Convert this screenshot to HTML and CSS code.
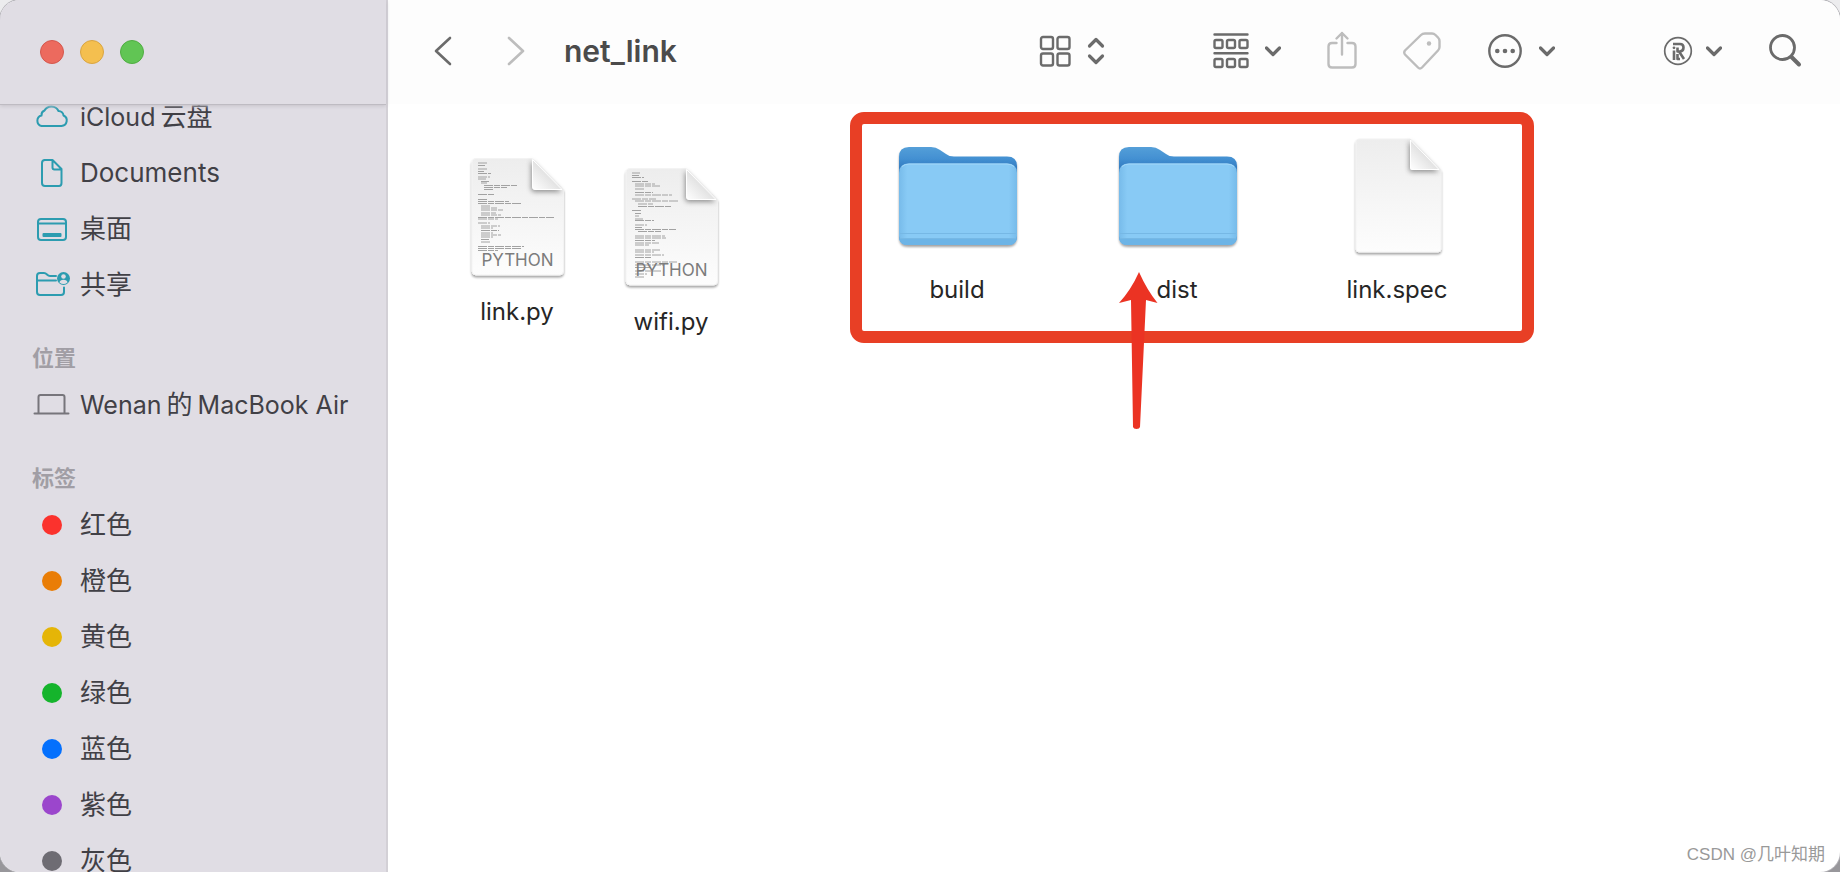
FILE: index.html
```html
<!DOCTYPE html>
<html lang="zh-CN">
<head>
<meta charset="utf-8">
<title>net_link</title>
<link rel="stylesheet" href="styles.css">
</head>
<body>
<svg class="defs" aria-hidden="true">
  <defs>
    <linearGradient id="paper" x1="0" y1="0" x2="0" y2="1"><stop offset="0" stop-color="#ededed"/><stop offset="1" stop-color="#fdfdfd"/></linearGradient>
    <linearGradient id="fold" x1="0" y1="1" x2="1" y2="0"><stop offset="0" stop-color="#ffffff"/><stop offset="0.5" stop-color="#e2e2e2"/><stop offset="1" stop-color="#f4f4f4"/></linearGradient>
    <linearGradient id="tab" x1="0" y1="0" x2="0" y2="1"><stop offset="0" stop-color="#559fd8"/><stop offset="0.12" stop-color="#4390d2"/><stop offset="0.24" stop-color="#2f76bb"/></linearGradient>
    <linearGradient id="front" x1="0" y1="0" x2="1" y2="0"><stop offset="0" stop-color="#77bbea"/><stop offset="0.07" stop-color="#88caf5"/><stop offset="0.93" stop-color="#88caf5"/><stop offset="1" stop-color="#77bbea"/></linearGradient>
    <filter id="drop" x="-10%" y="-10%" width="120%" height="125%"><feDropShadow dx="0" dy="2" stdDeviation="1.3" flood-color="#000" flood-opacity="0.36"/></filter>
    <filter id="soft" x="-30%" y="-30%" width="160%" height="160%"><feDropShadow dx="-1" dy="2" stdDeviation="2.500" flood-color="#000" flood-opacity="0.4"/></filter>
    <symbol id="chevron" viewBox="0 0 16 12"><path d="M1.500 3 8 9.500l6.500-6.500" fill="none" stroke="currentColor" stroke-width="3.200" stroke-linecap="round" stroke-linejoin="round"/></symbol>
    <symbol id="page" viewBox="0 0 128 128">
      <path filter="url(#drop)" fill="url(#paper)" stroke="#f3f3f3" d="M23 3.500H79L110.500 35V116Q110.500 120 106.500 120H23Q19 120 19 116V7.500Q19 3.500 23 3.500Z"/>
      <path filter="url(#soft)" fill="url(#fold)" d="M79 3.500 110 35H83Q79 35 79 31Z"/>
      <path fill="url(#fold)" stroke="#fff" d="M79.500 4.500 109 34.500H83Q79.500 34.500 79.500 31Z"/>
    </symbol>
    <symbol id="folder" viewBox="0 0 128 128">
      <path filter="url(#drop)" fill="url(#tab)" d="M6 24Q6 14 16 14H38Q43 14 47 17L53 21Q56 23.500 61 23.500H114Q124 23.500 124 33V103Q124 112 115 112H15Q6 112 6 103Z"/>
      <path fill="url(#front)" d="M6 40Q6 30.500 16 30.500H114Q124 30.500 124 40V103Q124 112 115 112H15Q6 112 6 103Z"/>
      <path fill="#6db4e6" d="M6 106H124Q122 112 115 112H15Q8 112 6 106Z"/>
      <path stroke="#76b8e5" d="M7 100.500H123M7 105.500H123"/>
      <path stroke="#a4d8f9" fill="none" d="M9 33.500Q12 31 16 31H114Q118 31 121 33.500"/>
    </symbol>
  </defs>
</svg>

<div class="window">
  <aside class="sidebar">
    <div class="window-controls">
      <button class="light close" aria-label="关闭"></button>
      <button class="light minimize" aria-label="最小化"></button>
      <button class="light maximize" aria-label="缩放"></button>
    </div>
    <nav class="sidebar-scroll">
      <ul class="places">
        <li><a href="#"><svg class="place-icon" viewBox="0 0 38 32" width="38" height="32"><path d="M12 25H28.500A5.500 5.500 0 0 0 30.500 14.500 5 5 0 0 0 25.500 10 7.800 7.800 0 0 0 11.500 9.500 5 5 0 0 0 8.500 14.500 5.400 5.400 0 0 0 8.500 25Z"/></svg><span class="latin">iCloud<span class="han">云盘</span></span></a></li>
        <li><a href="#"><svg class="place-icon" viewBox="0 0 38 32" width="38" height="32"><path d="M11 3H19.500L28.500 12V26Q28.500 29 26 29H12Q9 29 9 26V6Q9 3 12 3M19.500 3V10.500Q19.500 12.500 21.500 12.500H28.500"/></svg><span>Documents</span></a></li>
        <li><a href="#"><svg class="place-icon" viewBox="0 0 38 32" width="38" height="32"><rect x="5" y="6" width="28" height="21" rx="3"/><path d="M5 10.500H33"/><rect class="solid" x="9.500" y="20" width="19" height="4" rx="1"/></svg><span>桌面</span></a></li>
        <li><a href="#"><svg class="place-icon" viewBox="0 0 38 32" width="38" height="32"><path d="M31 18.500V23Q31 26 28 26H7Q4 26 4 23V7Q4 4 7 4H11Q12.500 4 14 5.500T17 7H23M4 11.500H23"/><circle class="solid" cx="30.500" cy="9.500" r="6.500"/><circle class="hole" cx="30.500" cy="7.500" r="2.300"/><path class="hole" d="M26.500 13.500Q27 10.800 30.500 10.800T34.500 13.500Q32.500 15 30.500 15T26.500 13.500Z"/></svg><span>共享</span></a></li>
      </ul>
      <h2>位置</h2>
      <ul class="places">
        <li><a href="#"><svg class="place-icon gray" viewBox="0 0 38 32" width="38" height="32"><path d="M5.500 24V8Q5.500 6 7.500 6H29.500Q31.500 6 31.500 8V24M1.500 24.500H35.500"/></svg><span class="latin">Wenan<span class="han">的</span><span class="after-han">MacBook Air</span></span></a></li>
      </ul>
      <h2>标签</h2>
      <ul class="places">
        <li><a href="#"><i class="dot red"></i><span>红色</span></a></li>
        <li><a href="#"><i class="dot orange"></i><span>橙色</span></a></li>
        <li><a href="#"><i class="dot yellow"></i><span>黄色</span></a></li>
        <li><a href="#"><i class="dot green"></i><span>绿色</span></a></li>
        <li><a href="#"><i class="dot blue"></i><span>蓝色</span></a></li>
        <li><a href="#"><i class="dot purple"></i><span>紫色</span></a></li>
        <li><a href="#"><i class="dot grey"></i><span>灰色</span></a></li>
      </ul>
    </nav>
  </aside>

  <main class="main">
    <header class="toolbar">
      <div class="history">
        <button class="tool" aria-label="后退"><svg width="20" height="32" viewBox="0 0 20 32"><path d="M17 3 3 16 17 29" stroke-width="2.600"/></svg></button>
        <button class="tool faint" aria-label="前进"><svg width="20" height="32" viewBox="0 0 20 32"><path d="M3 3 17 16 3 29" stroke-width="2.600"/></svg></button>
      </div>
      <h1>net_link</h1>
      <div class="tools">
        <button class="tool" aria-label="显示方式"><svg width="32" height="32" viewBox="0 0 32 32"><rect x="2" y="2" width="12" height="12" rx="2"/><rect x="18.500" y="2" width="12" height="12" rx="2"/><rect x="2" y="18.500" width="12" height="12" rx="2"/><rect x="18.500" y="18.500" width="12" height="12" rx="2"/></svg><svg class="bold" width="18" height="32" viewBox="0 0 18 32"><path d="M2.500 11 9 4.500l6.500 6.500M2.500 21 9 27.500l6.500-6.500"/></svg></button>
        <button class="tool apart" aria-label="分组"><svg width="36" height="36" viewBox="0 0 36 36"><path d="M1.500 1.500h33M1.500 20.300h33"/><rect x="1.500" y="7" width="8" height="8" rx="1.500"/><rect x="14" y="7" width="8" height="8" rx="1.500"/><rect x="26.500" y="7" width="8" height="8" rx="1.500"/><rect x="1.500" y="26" width="8" height="8" rx="1.500"/><rect x="14" y="26" width="8" height="8" rx="1.500"/><rect x="26.500" y="26" width="8" height="8" rx="1.500"/></svg><svg width="16" height="12"><use href="#chevron"/></svg></button>
        <button class="tool faint" aria-label="共享"><svg width="30" height="40" viewBox="0 0 30 40"><path d="M9.500 12H5Q1.500 12 1.500 15.500V33Q1.500 36.500 5 36.500H25Q28.500 36.500 28.500 33V15.500Q28.500 12 25 12H20.500M15 23.500V2M9.500 7.500 15 2l5.500 5.500"/></svg></button>
        <button class="tool faint" aria-label="标记"><svg width="38" height="38" viewBox="0 0 38 38"><path d="M22 1.500H29Q31 1.500 32.500 3L35 5.500Q36.500 7 36.500 9V15Q36.500 17 35 18.500L19 35.500Q17 37.500 15 35.500L2 22.500Q0.500 20.500 2 18.500L18 3Q19.500 1.500 22 1.500Z"/><circle class="fill" cx="26" cy="11.500" r="2.200"/></svg></button>
        <button class="tool" aria-label="操作"><svg width="36" height="36" viewBox="0 0 36 36"><circle cx="18" cy="18" r="15.700"/><circle class="fill" cx="10.300" cy="18" r="2.300"/><circle class="fill" cx="18" cy="18" r="2.300"/><circle class="fill" cx="25.700" cy="18" r="2.300"/></svg><svg width="16" height="12"><use href="#chevron"/></svg></button>
        <button class="tool apart tight" aria-label="右键助手"><svg width="30" height="30" viewBox="0 0 30 30"><circle class="thin" cx="15" cy="15" r="13.300"/><path class="mono" d="M10 8H17Q20.500 8 20.500 11.500T17 15.500H14.500V11.500M16 15.500 21 23M11 14.500V24M14.500 18V23H17"/><circle class="fill" cx="11" cy="11.800" r="1.400"/></svg><svg width="16" height="12"><use href="#chevron"/></svg></button>
        <button class="tool" aria-label="搜索"><svg width="34" height="36" viewBox="0 0 34 36"><circle class="medium" cx="14.500" cy="14.500" r="12"/><path class="heavy" d="M23.500 24 31 31.500"/></svg></button>
      </div>
    </header>

    <section class="canvas">
      <figure class="file link-py">
        <svg width="128" height="128" viewBox="0 0 128 128"><use href="#page"/>
          <g class="code"><path d="M25 8h10M25 10.500h7M25 14h9M25 16.500h6M25 18.500h13M25 22h12M25 24h8M28 26.500h8M28 28h6M31 30.500h33M31 32.500h23M31 34.500h9M25 39.500h16M25 44.500h9M25 46.500h31M25 48.500h43M28 51h10M28 53h17M28 55h22M28 58h15M28 60h20M25 62.500h76M25 64h20M25 68h12M28 71h19M28 73h12M28 75.500h18M28 78h12M28 80h20M28 82h12M28 84.500h8M28 87h10M25 91.500h46M25 93.500h44M25 95.500h20"/></g>
          <text class="kind" x="64.500" y="111">PYTHON</text></svg>
        <figcaption>link.py</figcaption>
      </figure>
      <figure class="file wifi-py">
        <svg width="128" height="128" viewBox="0 0 128 128"><use href="#page"/>
          <g class="code"><path d="M25 8h8M25 10.500h7M25 12.500h12M25 16.500h17M28 19h20M28 21h25M28 24h10M28 27.500h18M28 30h37M25 34h24M28 36h43M31 39h15M31 41.500h34M25 45.500h9M28 48.500h6M28 51h4M28 54h8M28 55.500h19M28 60h12M28 62.500h7M28 64.500h41M31 66.500h23M28 71h30M28 73h31M28 75.500h20M28 78h24M28 80h14M28 85h25M28 87h19M28 90h29M28 92.500h17M28 97h42M28 100h29M28 102.500h17M28 106h26M28 109h12M28 112h9"/></g>
          <text class="kind" x="64.500" y="111">PYTHON</text></svg>
        <figcaption>wifi.py</figcaption>
      </figure>
      <figure class="file build">
        <svg width="128" height="128"><use href="#folder"/></svg>
        <figcaption>build</figcaption>
      </figure>
      <figure class="file dist">
        <svg width="128" height="128"><use href="#folder"/></svg>
        <figcaption>dist</figcaption>
      </figure>
      <figure class="file link-spec">
        <svg width="128" height="128" viewBox="0 0 128 128">
          <path filter="url(#drop)" fill="url(#paper)" stroke="#f3f3f3" d="M26 6H77L108 37V116Q108 119 105 119H26Q23 119 23 116V9Q23 6 26 6Z"/>
          <path filter="url(#soft)" fill="url(#fold)" d="M77 6 107 37H80Q77 37 77 34Z"/>
          <path fill="url(#fold)" stroke="#fff" d="M77.500 7 106 36.500H80Q77.500 36.500 77.500 34Z"/></svg>
        <figcaption>link.spec</figcaption>
      </figure>
      <div class="mark-box"></div>
      <svg class="mark-arrow" width="40" height="160" viewBox="0 0 40 160"><path d="M20 1Q28 19 38.500 32L27 29 21 156Q20.500 158 17.500 158T14 156L12 29 0 32Q12 19 20 1Z"/></svg>
      <p class="watermark">CSDN @几叶知期</p>
    </section>
  </main>
</div>
</body>
</html>
```
FILE: styles.css
```css
* { box-sizing: border-box; }

html, body { height: 100%; }

body {
  margin: 0;
  overflow: hidden;
  background: linear-gradient(#ececee 50%, #98979b 50%);
  font-family: Inter, "Noto Sans CJK SC", sans-serif;
  font-size: 26px;
  color: #414046;
}

.defs { position: absolute; width: 0; height: 0; }

.window {
  display: flex;
  height: 100vh;
  border-radius: 20px;
  overflow: hidden;
  background: #fff;
  box-shadow: 0 0 0 1px #b4b3b8;
}

/* Sidebar */
.sidebar {
  display: flex;
  flex-direction: column;
  flex: 0 0 388px;
  background: #e0dde4;
  border-right: 2px solid #d3d0d6;
}

.window-controls {
  display: flex;
  flex: 0 0 104px;
  align-items: center;
  gap: 16px;
  padding-left: 40px;
  z-index: 1;
  box-shadow: 0 1px 0 #bebbc2, 0 2px 4px #c4c1c8;
  background: #e0dde4;
}

.light {
  width: 24px;
  height: 24px;
  padding: 0;
  border: 1px solid;
  border-radius: 50%;
}

.close { background: #ec6a5e; border-color: #d4574d; }
.minimize { background: #f4bf4f; border-color: #d9a542; }
.maximize { background: #61c554; border-color: #50ad42; }

.sidebar-scroll { flex: 1; min-height: 0; overflow: hidden; }

.places { margin: 0; padding: 0; list-style: none; }
.places:first-child { margin-top: -15px; }

.places a {
  display: flex;
  align-items: center;
  gap: 9px;
  height: 56px;
  padding-left: 33px;
  line-height: 30px;
  color: inherit;
  text-decoration: none;
  white-space: nowrap;
}

.latin { font-size: 25px; }
.han { margin-left: 5px; font-size: 26px; }
.after-han { margin-left: 5px; }

.sidebar h2 {
  margin: 0;
  padding: 26px 0 0 32px;
  font-size: 22px;
  line-height: 38px;
  font-weight: 700;
  color: #a19ea5;
}

.place-icon {
  flex: none;
  fill: none;
  stroke: #2c9cb0;
  stroke-width: 2;
  stroke-linejoin: round;
  stroke-linecap: round;
}

.place-icon.gray { stroke: #77757b; }
.place-icon .solid { fill: #2c9cb0; stroke: none; }
.place-icon .hole { fill: #e0dde4; stroke: none; }

.dot { width: 20px; height: 20px; margin: 0 9px; border-radius: 50%; }
.red { background: #fb322d; }
.orange { background: #e97d06; }
.yellow { background: #e5b507; }
.green { background: #15b42c; }
.blue { background: #0470fd; }
.purple { background: #9b46cc; }
.grey { background: #6e6c73; }

/* Toolbar */
.main { display: flex; flex-direction: column; flex: 1; min-width: 0; }

.toolbar {
  display: flex;
  align-items: center;
  flex: 0 0 104px;
  padding: 0 38px 2px 45px;
  background: #fdfdfd;
}

.history { display: flex; gap: 53px; }

.toolbar h1 {
  margin: 0 0 0 38px;
  font-size: 30px;
  line-height: 36px;
  font-weight: 600;
  color: #4b4b4b;
}

.tools { display: flex; align-items: center; gap: 46px; margin-left: auto; }

.tool {
  display: flex;
  align-items: center;
  gap: 16px;
  padding: 0;
  border: 0;
  background: none;
  color: #6b6b6b;
}

.tool.faint { color: #bdbdbd; }
.tool.apart { margin-left: 62px; }
.tool.tight { gap: 13px; }

.tool svg {
  fill: none;
  stroke: currentColor;
  stroke-width: 2.4px;
  stroke-linecap: round;
  stroke-linejoin: round;
}

.tool .bold { stroke-width: 3.2px; }
.tool .thin { stroke-width: 1.7px; }
.tool .medium { stroke-width: 2.8px; }
.tool .heavy { stroke-width: 4px; }
.tool .fill { fill: currentColor; stroke: none; }
.tool .mono { stroke-width: 2.6px; stroke-linecap: butt; }

/* Icon canvas */
.canvas { position: relative; flex: 1; }

.file {
  position: absolute;
  display: flex;
  flex-direction: column;
  align-items: center;
  gap: 14px;
  width: 150px;
  margin: 0;
  font-size: 24px;
  line-height: 30px;
  color: #262626;
}

.link-py { left: 54px; top: 51px; }
.wifi-py { left: 208px; top: 61px; }
.build { left: 494px; top: 29px; }
.dist { left: 714px; top: 29px; }
.link-spec { left: 934px; top: 29px; }

.code { stroke: #a2a2a2; stroke-width: 1px; stroke-dasharray: 9 1 6 1; }
.kind { font-size: 17px; fill: #7c7c7c; text-anchor: middle; }

.mark-box {
  position: absolute;
  left: 462px;
  top: 8px;
  width: 684px;
  height: 231px;
  border: 12px solid #e83f25;
  border-radius: 14px;
}

.mark-arrow { position: absolute; left: 731px; top: 167px; fill: #eb3323; }

.watermark {
  position: absolute;
  right: 15px;
  bottom: 3px;
  margin: 0;
  font-family: "Liberation Sans", "Noto Sans CJK SC", sans-serif;
  font-size: 17px;
  line-height: 28px;
  color: #999;
}
```
